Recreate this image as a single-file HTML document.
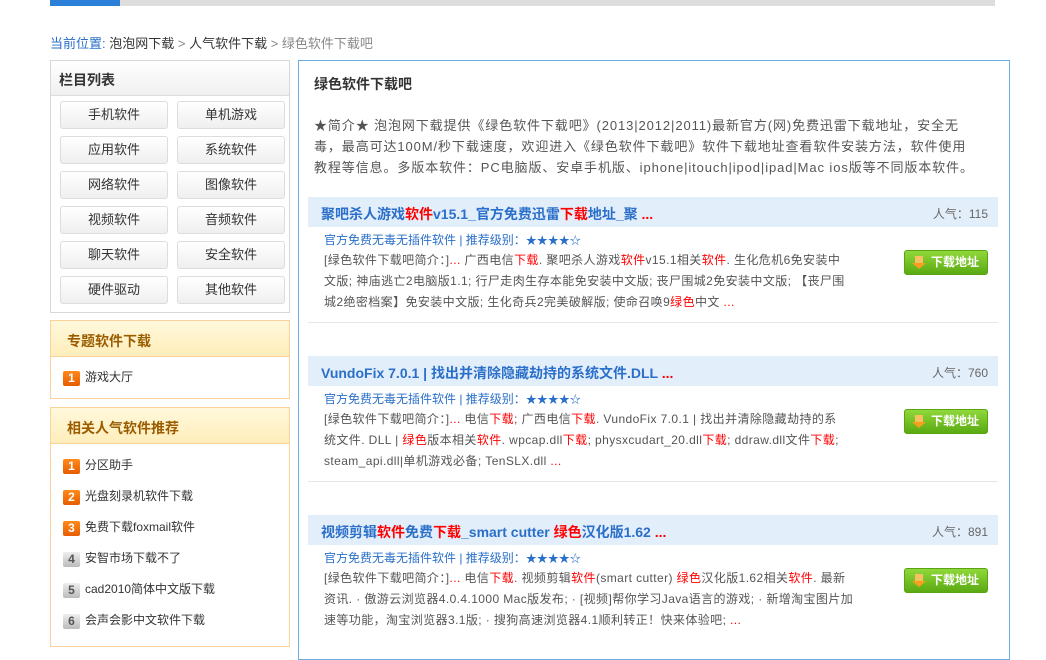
<!DOCTYPE html>
<html><head><meta charset="utf-8"><style>
*{margin:0;padding:0;box-sizing:border-box}
body{width:1046px;height:636px;overflow:hidden;background:#fff;font-family:"Liberation Sans","Noto Sans CJK SC",sans-serif;font-size:12px;color:#555;position:relative}
.a{position:absolute;white-space:nowrap}
.topbar{left:50px;top:0;width:945px;height:6px;background:#ddd}
.topbar i{position:absolute;left:0;top:0;width:70px;height:6px;background:#2b7fd6}
.box{position:absolute;border:1px solid #d8d8d8}
.hd{position:absolute;left:0;right:0;top:0;height:35px;background:linear-gradient(#fff,#f0f0f0);border-bottom:1px solid #ddd;font-size:14px;font-weight:bold;color:#333;padding:9px 0 0 8px}
.btn{position:absolute;width:108px;height:28px;border:1px solid #ddd;border-radius:3px;background:linear-gradient(#fff,#efefef);text-align:center;line-height:26px;font-size:13px;color:#333}
.ob{position:absolute;border:1px solid #fbd39a}
.ohd{position:absolute;left:0;right:0;top:0;height:36px;background:linear-gradient(#fff8dc,#ffeebb);border-bottom:1px solid #fbd39a;font-size:14px;font-weight:bold;color:#9b5c00;padding:10px 0 0 16px}
.li{position:absolute;left:12px;font-size:12px;color:#333;white-space:nowrap}
.n{display:inline-block;width:17px;height:15px;border-radius:2px;background:linear-gradient(#ff8a1c,#e65c00);color:#fff;font-weight:bold;text-align:center;line-height:15px;font-size:12px;margin-right:5px;vertical-align:-1px}
.n.g{background:linear-gradient(#eee,#bbb);color:#555}
.band{position:absolute;left:308px;width:690px;height:30px;background:#e3eefb}
.tt{position:absolute;left:13px;top:7px;font-size:14px;font-weight:bold;color:#2a6fc9;white-space:nowrap}
.r{color:#f00}
.pop{position:absolute;right:10px;top:8px;color:#666;font-size:12px}
.sub{color:#2a6fc9;font-size:12px}
.st{font-size:11px}
.desc{position:absolute;left:324px;font-size:12px;line-height:21px;color:#555;white-space:nowrap;letter-spacing:0.4px}
.dl{position:absolute;left:904px;width:84px;height:25px;border:1px solid #5aa312;border-radius:3px;background:linear-gradient(#8fd83a,#5aaa12);color:#fff;font-weight:bold;font-size:12px;line-height:23px;padding-left:26px}
.dl:before{content:"";position:absolute;left:10px;top:5px;width:8px;height:7px;background:#f7c060}
.dl:after{content:"";position:absolute;left:7px;top:12px;border-left:7px solid transparent;border-right:7px solid transparent;border-top:6px solid #f7a020}
.sep{position:absolute;left:308px;width:690px;height:1px;background:#e6e6e6}
</style></head><body>
<div class="a topbar"><i></i></div>
<div class="a" style="left:50px;top:33px;font-size:13px;color:#888"><span style="color:#2a6fc9">当前位置:</span> <span style="color:#333">泡泡网下载</span> &gt; <span style="color:#333">人气软件下载</span> &gt; 绿色软件下载吧</div>

<div class="box" style="left:50px;top:60px;width:240px;height:253px">
<div class="hd">栏目列表</div>
<div class="btn" style="left:9px;top:40px">手机软件</div><div class="btn" style="left:126px;top:40px">单机游戏</div>
<div class="btn" style="left:9px;top:75px">应用软件</div><div class="btn" style="left:126px;top:75px">系统软件</div>
<div class="btn" style="left:9px;top:110px">网络软件</div><div class="btn" style="left:126px;top:110px">图像软件</div>
<div class="btn" style="left:9px;top:145px">视频软件</div><div class="btn" style="left:126px;top:145px">音频软件</div>
<div class="btn" style="left:9px;top:180px">聊天软件</div><div class="btn" style="left:126px;top:180px">安全软件</div>
<div class="btn" style="left:9px;top:215px">硬件驱动</div><div class="btn" style="left:126px;top:215px">其他软件</div>
</div>

<div class="ob" style="left:50px;top:320px;width:240px;height:79px">
<div class="ohd">专题软件下载</div>
<div class="li" style="top:47px"><span class="n">1</span>游戏大厅</div>
</div>

<div class="ob" style="left:50px;top:407px;width:240px;height:240px">
<div class="ohd">相关人气软件推荐</div>
<div class="li" style="top:48px"><span class="n">1</span>分区助手</div>
<div class="li" style="top:79px"><span class="n">2</span>光盘刻录机软件下载</div>
<div class="li" style="top:110px"><span class="n">3</span>免费下载foxmail软件</div>
<div class="li" style="top:141px"><span class="n g">4</span>安智市场下载不了</div>
<div class="li" style="top:172px"><span class="n g">5</span>cad2010简体中文版下载</div>
<div class="li" style="top:203px"><span class="n g">6</span>会声会影中文软件下载</div>
</div>

<div class="a" style="left:298px;top:60px;width:712px;height:600px;border:1px solid #6aaee8"></div>
<div class="a" style="left:314px;top:74px;font-size:14px;font-weight:bold;color:#333">绿色软件下载吧</div>
<div class="a" style="left:314px;top:115px;font-size:13px;line-height:21px;color:#555;letter-spacing:0.9px">★简介★ 泡泡网下载提供《绿色软件下载吧》(2013|2012|2011)最新官方(网)免费迅雷下载地址，安全无<br>毒，最高可达100M/秒下载速度，欢迎进入《绿色软件下载吧》软件下载地址查看软件安装方法，软件使用<br>教程等信息。多版本软件：PC电脑版、安卓手机版、iphone|itouch|ipod|ipad|Mac ios版等不同版本软件。</div>

<div class="band" style="top:197px"><div class="tt">聚吧杀人游戏<span class="r">软件</span>v15.1_官方免费迅雷<span class="r">下载</span>地址_聚 <span class="r">...</span></div><div class="pop">人气：115</div></div>
<div class="a sub" style="left:324px;top:231px">官方免费无毒无插件软件 | 推荐级别：<span class="st">★★★★☆</span></div>
<div class="desc" style="top:250px">[绿色软件下载吧简介：]<span class="r">...</span> 广西电信<span class="r">下载</span>. 聚吧杀人游戏<span class="r">软件</span>v15.1相关<span class="r">软件</span>. 生化危机6免安装中<br>文版; 神庙逃亡2电脑版1.1; 行尸走肉生存本能免安装中文版; 丧尸围城2免安装中文版; 【丧尸围<br>城2绝密档案】免安装中文版; 生化奇兵2完美破解版; 使命召唤9<span class="r">绿色</span>中文 <span class="r">...</span></div>
<div class="dl" style="top:250px">下载地址</div>
<div class="sep" style="top:322px"></div>

<div class="band" style="top:356px"><div class="tt">VundoFix 7.0.1 | 找出并清除隐藏劫持的系统文件.DLL <span class="r">...</span></div><div class="pop">人气：760</div></div>
<div class="a sub" style="left:324px;top:390px">官方免费无毒无插件软件 | 推荐级别：<span class="st">★★★★☆</span></div>
<div class="desc" style="top:409px">[绿色软件下载吧简介：]<span class="r">...</span> 电信<span class="r">下载</span>; 广西电信<span class="r">下载</span>. VundoFix 7.0.1 | 找出并清除隐藏劫持的系<br>统文件. DLL | <span class="r">绿色</span>版本相关<span class="r">软件</span>. wpcap.dll<span class="r">下载</span>; physxcudart_20.dll<span class="r">下载</span>; ddraw.dll文件<span class="r">下载</span>;<br>steam_api.dll|单机游戏必备; TenSLX.dll <span class="r">...</span></div>
<div class="dl" style="top:409px">下载地址</div>
<div class="sep" style="top:481px"></div>

<div class="band" style="top:515px"><div class="tt">视频剪辑<span class="r">软件</span>免费<span class="r">下载</span>_smart cutter <span class="r">绿色</span>汉化版1.62 <span class="r">...</span></div><div class="pop">人气：891</div></div>
<div class="a sub" style="left:324px;top:549px">官方免费无毒无插件软件 | 推荐级别：<span class="st">★★★★☆</span></div>
<div class="desc" style="top:568px">[绿色软件下载吧简介：]<span class="r">...</span> 电信<span class="r">下载</span>. 视频剪辑<span class="r">软件</span>(smart cutter) <span class="r">绿色</span>汉化版1.62相关<span class="r">软件</span>. 最新<br>资讯. · 傲游云浏览器4.0.4.1000 Mac版发布; · [视频]帮你学习Java语言的游戏; · 新增淘宝图片加<br>速等功能，淘宝浏览器3.1版; · 搜狗高速浏览器4.1顺利转正！快来体验吧; <span class="r">...</span></div>
<div class="dl" style="top:568px">下载地址</div>
</body></html>
